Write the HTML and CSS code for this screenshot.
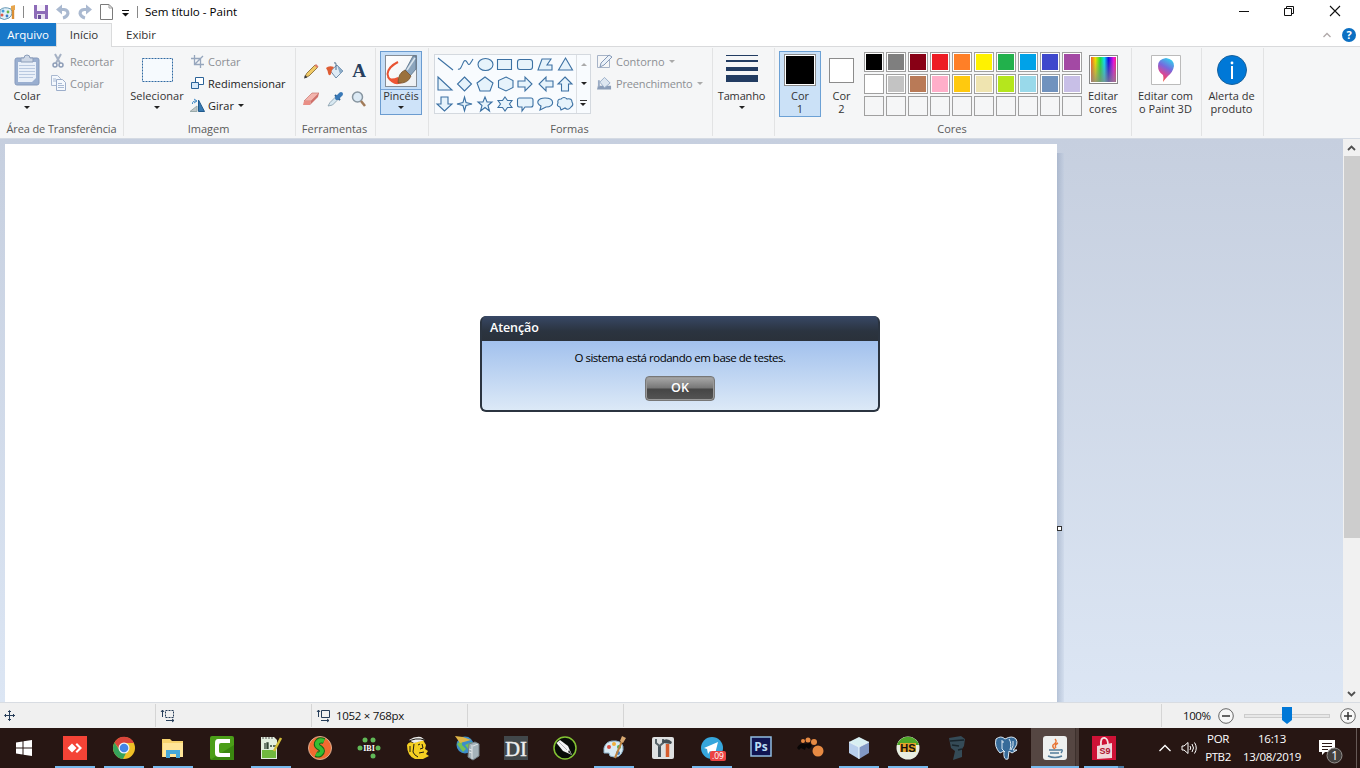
FILE: index.html
```html
<!DOCTYPE html>
<html lang="pt-BR">
<head>
<meta charset="utf-8">
<title>Sem título - Paint</title>
<link rel="stylesheet" href="styles.css">
</head>
<body>
<div class="screen">
  <header class="titlebar">
    <svg class="app-icon" width="16" height="20" viewBox="0 0 16 20"><path d="M0 8Q4 4 11 7Q14 12 9 16Q4 19 0 16Z" fill="#e3f1f8" stroke="#6497b5"/><circle cx="3" cy="9" r="1.5" fill="#4299d5"/><circle cx="8" cy="10" r="1.4" fill="#67b548"/><circle cx="2" cy="13" r="1.5" fill="#df5a4c"/><circle cx="7" cy="14" r="1.4" fill="#3b7bc4"/><path d="M13 7V17" stroke="#d88d34" stroke-width="2.4"/><path d="M11 4l4-1v5h-4z" fill="#e6a54d"/></svg>
    <i class="tsep first"></i>
    <svg class="save" width="14" height="14" viewBox="0 0 14 14"><path d="M0 0H14V14H1L0 13Z" fill="#8d6bb8"/><path d="M3 0h8v6H3z" fill="#f7f4fb"/><path d="M3 9h8v5H3z" fill="#e5e1ee"/><path d="M4 10h3v4H4z" fill="#69509a"/></svg>
    <svg class="undo" width="14" height="14" viewBox="0 0 14 14"><path d="M3 4.500H8Q12 5 12 8.500Q11 12 7 13" fill="none" stroke="#aab9d0" stroke-width="3"/><path d="M0 4.500L6 -.5V9.500Z" fill="#aab9d0"/></svg>
    <svg class="redo" width="14" height="14" viewBox="0 0 14 14"><path d="M11 4.500H6Q2 5 2 8.500Q3 12 7 13" fill="none" stroke="#aab9d0" stroke-width="3"/><path d="M14 4.500L8 -.5V9.500Z" fill="#aab9d0"/></svg>
    <svg class="newdoc" width="13" height="16" viewBox="0 0 13 16"><path d="M.5.5H9L12.500 4V15.500H.5Z" fill="#fff" stroke="#7b7b7b"/><path d="M9 .5V4h3.500" fill="none" stroke="#9b9b9b"/></svg>
    <svg class="qmenu" width="7" height="7" viewBox="0 0 7 7"><path d="M0 .5H7" stroke="#111"/><path d="M0 3H7L3.500 6.500Z" fill="#111"/></svg>
    <i class="tsep second"></i>
    <span class="wtitle">Sem título - Paint</span>
    <div class="wctl">
      <svg width="12" height="12" viewBox="0 0 12 12"><path d="M1 6.500H11" stroke="#111"/></svg>
      <svg width="12" height="12" viewBox="0 0 12 12"><path d="M1.500 3.500h7v7h-7zM3.500 3V1.500h7v7H9" fill="none" stroke="#111"/></svg>
      <svg width="12" height="12" viewBox="0 0 12 12"><path d="M1 1L11 11M11 1L1 11" stroke="#111" stroke-width="1.100"/></svg>
    </div>
  </header>
  <nav class="tabs">
    <span class="tab file">Arquivo</span><span class="tab active">Início</span><span class="tab view">Exibir</span>
    <svg class="collapse" width="8" height="6" viewBox="0 0 8 6"><path d="M.5 5L4 1.500L7.500 5" fill="none" stroke="#b0a9a9" stroke-width="1.300"/></svg>
    <span class="help">?</span>
  </nav>
  <section class="ribbon">
    <div class="group g-clip">
      <div class="content">
        <div class="big colar">
          <div class="bicon"><svg width="26" height="32" viewBox="0 0 26 32"><rect x="1" y="4" width="24" height="27" rx="2" fill="#9aafd0" stroke="#879bbd"/><path d="M4 8H22V24L18 28H4Z" fill="#e9f0f9"/><path d="M5 11.500H21M5 14.500H21M5 17.500H21M5 20.500H21M5 23.500H19" stroke="#b9c9e0"/><path d="M7 4h3q0-3 3-3t3 3h3v4H7z" fill="#cdd7e6" stroke="#8b9db9"/></svg></div>
          <span>Colar</span><b class="arr"></b>
        </div>
        <div class="smalls clipsm">
          <div class="small off"><svg width="14" height="14" viewBox="0 0 14 14"><path d="M4 0L9 9M10 0L5 9" stroke="#a5b1c4" stroke-width="2"/><circle cx="4" cy="11" r="2" fill="none" stroke="#8d9db7" stroke-width="1.500"/><circle cx="10" cy="11" r="2" fill="none" stroke="#8d9db7" stroke-width="1.500"/></svg><span>Recortar</span></div>
          <div class="small off"><svg width="15" height="16" viewBox="0 0 15 16"><path d="M.5.5h6l3 3v7h-9z" fill="#f4f8fd" stroke="#a9b8d0"/><path d="M5.500 4.500h6l3 3v8h-9z" fill="#f4f8fd" stroke="#9caecb"/><path d="M2 4h3M2 6h3M7 8.500h4M7 10.500h6M7 12.500h6" stroke="#a9bad4"/></svg><span>Copiar</span></div>
        </div>
      </div>
      <div class="glabel">Área de Transferência</div>
    </div>
    <div class="group g-image">
      <div class="content">
        <div class="big selec"><div class="bicon"><svg width="31" height="26" viewBox="0 0 31 26"><rect x=".5" y="1.500" width="30" height="23" fill="#f6fafe" stroke="#316aa3" stroke-dasharray="2 1"/></svg></div><span>Selecionar</span><b class="arr"></b></div>
        <div class="smalls imgsm">
          <div class="small off"><svg width="13" height="13" viewBox="0 0 13 13"><path d="M3.500 0V9.500H13M0 3.500H9.500V13M4 9L12 1" fill="none" stroke="#96a6bd" stroke-width="1.300"/></svg><span>Cortar</span></div>
          <div class="small"><svg width="13" height="13" viewBox="0 0 13 13"><path d="M4.500.5h8v7h-8z" fill="#fff" stroke="#2c6499"/><path d="M.5 5.500h7v6h-7z" fill="#d8eafa" stroke="#2c6499"/></svg><span>Redimensionar</span></div>
          <div class="small"><svg width="13" height="13" viewBox="0 0 13 13"><path d="M-1 12.500L6 7V12.500Z" fill="#c2c7c8" stroke="#9aa"/><path d="M7.500 1V12.500H13.500Z" fill="#3779b2" stroke="#205a8d"/><path d="M1.500 5Q1 2 5 2M3 0l3 2-3 2" fill="none" stroke="#438bc6"/></svg><span>Girar</span><b class="arr"></b></div>
        </div>
      </div>
      <div class="glabel">Imagem</div>
    </div>
    <div class="group g-tools">
      <div class="content toolgrid">
        <svg width="18" height="18" viewBox="0 0 18 18"><path d="M3 15L4.500 11.500L13 3L15.500 5.500L7 14Z" fill="#f0ca67" stroke="#8c7039" stroke-width=".9"/><path d="M12.500 3.500l2.500 2.500 1.500-1.500-2.500-2.500z" fill="#dc7c6a"/><path d="M2 16.500l1-3.500 2.500 2.500z" fill="#393939"/></svg>
        <svg width="18" height="18" viewBox="0 0 18 18"><path d="M4.500 9L11 3L17 9L10 16Z" fill="#dfebf5" stroke="#718daa"/><path d="M11 3L17 9L14 12Z" fill="#8dadc9"/><path d="M10 8V2Q10 0 8 1" fill="none" stroke="#53718d"/><path d="M0 6Q3 3 8 5Q5 8 5 12Q3 15 2 11Q2 9 0 6Z" fill="#de5d34"/></svg>
        <span class="letter">A</span>
        <svg width="18" height="18" viewBox="0 0 18 18"><path d="M2 11L10 3H17L9 11Z" fill="#f3b4ad" stroke="#c8766f" stroke-width=".7"/><path d="M2 11H9L8 15H1Z" fill="#e98f86"/><path d="M9 11L17 3L16 7L8 15Z" fill="#cf706a"/></svg>
        <svg width="18" height="18" viewBox="0 0 18 18"><path d="M2 16L4 12.500L10 6.500L12.500 9L6.500 15Z" fill="#d8e8f1" stroke="#839aaa" stroke-width=".8"/><path d="M9 5L14 10" stroke="#285d91" stroke-width="2"/><path d="M11 8L15 4" stroke="#3979b7" stroke-width="4" stroke-linecap="round"/></svg>
        <svg width="18" height="18" viewBox="0 0 18 18"><circle cx="7.500" cy="7" r="5" fill="#dceaf5" stroke="#8795a0" stroke-width="1.500"/><path d="M11 11L15 16" stroke="#a17b59" stroke-width="2.500"/></svg>
      </div>
      <div class="glabel">Ferramentas</div>
    </div>
    <div class="group g-brush">
      <div class="content">
        <div class="big brushbtn">
          <div class="bicon"><svg width="32" height="32" viewBox="0 0 32 32"><defs><linearGradient id="bg" y2="1" x2="1"><stop stop-color="#fff"/><stop offset="1" stop-color="#eceff2"/></linearGradient></defs><rect x=".5" y=".5" width="31" height="31" fill="url(#bg)" stroke="#858d96"/><path d="M13 7Q3 12 2.500 19Q3 26 13 28" fill="none" stroke="#e85332" stroke-width="2"/><path d="M2 22Q6 25 13 22L17 28Q8 32 2 22Z" fill="#ee5534"/><path d="M20 16L28 1H31V14L25 21Z" fill="#8ca5bd" stroke="#4c657e" stroke-width=".7"/><path d="M22 15L30 3" stroke="#dae5ed" stroke-width="1.500"/><path d="M13 28Q13 18 20 15L26 21Q23 29 13 28Z" fill="#9b713c" stroke="#6e4c2a" stroke-width=".7"/></svg></div>
          <span>Pincéis</span><b class="arr"></b>
        </div>
      </div>
    </div>
    <div class="group g-shapes">
      <div class="content">
        <div class="shapebox">
          <svg width="140" height="58" viewBox="0 0 140 58"><g fill="#e6f3fb" stroke="#3c71a3" stroke-width="1.100"><path d="M3 3L18 15"/><path d="M23 14C27 16 28 3 31 6S33 13 38 4" fill="none"/><ellipse cx="50.500" cy="9.500" rx="7.500" ry="6"/><path d="M62.500 4.500h14v10h-14z"/><rect x="82.500" y="4.500" width="15" height="10" rx="2.500"/><path d="M107 4H116L112 10H117V15H103Z"/><path d="M130.500 3L137.500 15H123.500Z"/>
          <path d="M3 22L17 35H3Z"/><path d="M29.500 22L36.500 29L29.500 36L22.500 29Z"/><path d="M50 22L58 28L55 36H45L42 28Z"/><path d="M71 22L78 25.500V32.500L71 36L63.500 32.500V25.500Z"/><path d="M83 26H90V22L97 29L90 36V32H83Z"/><path d="M118 26H111V22L104 29L111 36V32H118Z"/><path d="M130 22L137 29H133.500V36H126.500V29H123Z"/>
          <path d="M6 42H13V49H17L9.500 56L2 49H6Z"/><path d="M29.500 42L31 47.500L37 49L31 50.500L29.500 56L28 50.500L22 49L28 47.500Z"/><path d="M50 42L52 47H57L53 50.500L54.500 56L50 52.500L45.500 56L47 50.500L43 47H48Z"/><path d="M70 42L72.500 45.500H77L74.500 49L77 52.500H72.500L70 56L67.500 52.500H63L65.500 49L63 45.500H67.500Z"/><path d="M84 43H96Q98 43 98 45V50Q98 52 96 52H90L87 56V52H84Q82.500 52 82.500 50V45Q82.500 43 84 43Z"/><path d="M110 43C120 43 120 52 111 52L105 55L106 51C100 48 103 43 110 43Z"/><path d="M126 44Q129 41 132 44Q137 43 137 47Q139 50 136 52Q133 56 130 53L126 55L125 52Q121 51 123 48Q122 44 126 44Z"/></g></svg>
          <div class="shapescroll"><b class="up"></b><b class="arr"></b><div class="more"><i></i><b class="arr"></b></div></div>
        </div>
        <div class="smalls shsm">
          <div class="small off"><svg width="15" height="15" viewBox="0 0 15 15"><path d="M.5 1.500H12.500V13.500H.5Z" fill="none" stroke="#a6b3c7"/><path d="M3 13L4 9L12 1L15 3L7 11Z" fill="#eaf1f9" stroke="#8498b6"/></svg><span>Contorno</span><b class="arr dim"></b></div>
          <div class="small off"><svg width="15" height="15" viewBox="0 0 16 15"><path d="M1 10H15V14H0Z" fill="#8b9db8"/><path d="M3 6L8 1L14 7L8 12Z" fill="#dee7f1" stroke="#9aaec8"/><path d="M2 4V11" stroke="#9bacc4" stroke-width="2"/></svg><span class="fill">Preenchimento</span><b class="arr dim"></b></div>
        </div>
      </div>
      <div class="glabel">Formas</div>
    </div>
    <div class="group g-size"><div class="content"><div class="big"><div class="bicon lines"><i></i><i></i><i></i><i></i></div><span>Tamanho</span><b class="arr"></b></div></div></div>
    <div class="group g-colors">
      <div class="content">
        <div class="big cor one"><div class="bicon"><i class="cur black"></i></div><span>Cor<br>1</span></div>
        <div class="big cor two"><div class="bicon"><i class="cur white"></i></div><span>Cor<br>2</span></div>
        <div class="palette">
          <i class="k0"></i><i class="k1"></i><i class="k2"></i><i class="k3"></i><i class="k4"></i><i class="k5"></i><i class="k6"></i><i class="k7"></i><i class="k8"></i><i class="k9"></i>
          <i class="l0"></i><i class="l1"></i><i class="l2"></i><i class="l3"></i><i class="l4"></i><i class="l5"></i><i class="l6"></i><i class="l7"></i><i class="l8"></i><i class="l9"></i>
          <i class="e"></i><i class="e"></i><i class="e"></i><i class="e"></i><i class="e"></i><i class="e"></i><i class="e"></i><i class="e"></i><i class="e"></i><i class="e"></i>
        </div>
        <div class="big edit"><div class="bicon"><i class="rainbow"></i></div><span>Editar<br>cores</span></div>
      </div>
      <div class="glabel">Cores</div>
    </div>
    <div class="group g-3d"><div class="content"><div class="big"><div class="bicon"><svg width="30" height="30" viewBox="0 0 30 30"><defs><linearGradient id="p3" x1=".7" y1="0" x2=".3" y2="1"><stop stop-color="#30d1ee"/><stop offset=".4" stop-color="#7769dd"/><stop offset=".7" stop-color="#d94895"/><stop offset="1" stop-color="#f05b37"/></linearGradient></defs><path d="M.5.5h29v29H.5z" fill="#fff" stroke="#bbb"/><path d="M15 3Q23 4 23 11Q22 17 17 21Q14 24 12 27Q13 23 12 20Q7 17 7 11Q7 4 15 3Z" fill="url(#p3)"/></svg></div><span>Editar com<br>o Paint 3D</span></div></div></div>
    <div class="group g-alert"><div class="content"><div class="big"><div class="bicon"><svg width="30" height="30" viewBox="0 0 30 30"><circle cx="15" cy="15" r="14.500" fill="#0078d7" stroke="#17619d"/><circle cx="15" cy="8" r="1.400" fill="#fff"/><path d="M15 11V24" stroke="#fff" stroke-width="2"/></svg></div><span>Alerta de<br>produto</span></div></div></div>
  </section>
  <main class="work">
    <div class="canvas"><i class="handle"></i></div><i class="shade"></i>
    <div class="scroll">
      <svg width="16" height="17" viewBox="0 0 16 17"><path d="M5 11L8.500 7.500L12 11" fill="none" stroke="#505050" stroke-width="1.800"/></svg>
      <i class="thumb"></i>
      <svg class="down" width="16" height="17" viewBox="0 0 16 17"><path d="M5 7L8.500 10.500L12 7" fill="none" stroke="#505050" stroke-width="1.800"/></svg>
    </div>
  </main>
  <footer class="status">
    <div class="cell c1"><svg width="12" height="12" viewBox="0 0 12 12"><path d="M5.500 1V11M1 5.500H11" stroke="#263d59"/><path d="M4 2L5.500 .500L7 2M4 9L5.500 10.500L7 9M2 4L.5 5.500L2 7M9 4L10.500 5.500L9 7" fill="none" stroke="#263d59"/></svg></div>
    <div class="cell c2"><svg width="15" height="13" viewBox="0 0 15 13"><path d="M1.500 8V1M0 3l1.500-2L3 3M5 11.500h8M11 10l2 1.500-2 1.500" fill="none" stroke="#263d59"/><path d="M4.500 1.500h8v7h-8z" fill="none" stroke="#263d59" stroke-dasharray="2 1"/></svg></div>
    <div class="cell c3"><svg width="14" height="13" viewBox="0 0 14 13"><path d="M1.500 8V1M0 3l1.500-2L3 3M4 11.500h8M10 10l2 1.500-2 1.500M4.500 1.500h8v7h-8z" fill="none" stroke="#263d59"/></svg><span>1052 × 768px</span></div>
    <div class="cell c4"></div><div class="cell c5"></div>
    <div class="zoom"><span>100%</span><svg width="16" height="16" viewBox="0 0 16 16"><circle cx="8" cy="8" r="7.300" fill="#f7f7f7" stroke="#666"/><path d="M4 8H12" stroke="#333" stroke-width="1.500"/></svg><div class="track"><svg width="10" height="17" viewBox="0 0 10 17"><path d="M0 0H10V13L5 17L0 13Z" fill="#0078d7"/></svg></div><svg width="16" height="16" viewBox="0 0 16 16"><circle cx="8" cy="8" r="7.300" fill="#f7f7f7" stroke="#666"/><path d="M4 8H12M8 4V12" stroke="#333" stroke-width="1.500"/></svg></div>
  </footer>
  <footer class="taskbar">
    <div class="start"><svg width="16" height="16" viewBox="0 0 16 16"><path d="M0 2.500L6.500 1.500V7.500H0ZM7.500 1.300L16 0V7.500H7.500ZM0 8.500H6.500V14.500L0 13.500ZM7.500 8.500H16V16L7.500 14.700Z" fill="#fff"/></svg></div>
    <div class="apps">
      <div class="app on"><svg viewBox="0 0 24 24"><path d="M0 0h24v24H0z" fill="#f44336"/><path d="M9 7.500L13.500 12L9 16.500L4.500 12ZM12.500 8.500L14 7L19 12L14 17L12.500 15.500L16 12Z" fill="#fff"/></svg></div>
      <div class="app on"><svg viewBox="0 0 24 24"><circle cx="12" cy="12" r="11" fill="#efbf26"/><path d="M2.500 6.500A11 11 0 0 1 22 7H12L8 14Z" fill="#d9453b"/><path d="M2.500 6.500L8 15L14 17L11 23A11 11 0 0 1 2.500 6.500Z" fill="#36a35b"/><circle cx="12" cy="12" r="5.500" fill="#eef4fa"/><circle cx="12" cy="12" r="4.300" fill="#4285e5"/></svg></div>
      <div class="app on"><svg viewBox="0 0 24 24"><path d="M1 3H9L11 5H22V21H1Z" fill="#f7d36d"/><path d="M2 7H22V21H2Z" fill="#ffe598"/><path d="M5 22V14H19V22H15V18H9V22Z" fill="#45a7d8"/></svg></div>
      <div class="app"><svg viewBox="0 0 24 24"><rect width="24" height="24" rx="2" fill="#4b9e18"/><path d="M0 24L24 9V24Z" fill="#3a870f"/><path d="M20 3H8Q5 3 5 7V17Q5 21 9 21H20V17H10Q9 17 9 15V9Q9 7 11 7H20Z" fill="#fff"/></svg></div>
      <div class="app on"><svg viewBox="0 0 24 24"><path d="M2 1H15L18 4V23H2Z" fill="#e3eede"/><path d="M3 14H17V22H3Z" fill="#70b83e"/><path d="M4 1v2M7 1v2M10 1v2M13 1v2" stroke="#555"/><path d="M6 13V7M8 13V7H9V13M11 10H13M14 10H17" fill="none" stroke="#334535" stroke-width="1.300"/><path d="M22 2L15 15" stroke="#d3bd39" stroke-width="2.500"/></svg></div>
      <div class="app"><svg viewBox="0 0 24 24"><circle cx="12" cy="12" r="11.500" fill="#f06b30" stroke="#d9ad91"/><path d="M16 5Q11 3 9 7Q8 10 12 12Q16 15 12 18Q10 19 8 18" fill="none" stroke="#166516" stroke-width="6"/><path d="M16 5Q11 3 9 7Q8 10 12 12Q16 15 12 18Q10 19 8 18" fill="none" stroke="#36bd32" stroke-width="4"/></svg></div>
      <div class="app"><svg viewBox="0 0 24 24"><g fill="#61b957"><circle cx="8" cy="4" r="2.500"/><circle cx="16" cy="4" r="2.500"/><circle cx="3" cy="12" r="2.500"/><circle cx="21" cy="12" r="2.500"/><circle cx="16" cy="20" r="2.500"/></g><text x="12" y="14.500" text-anchor="middle" class="mini">IBI</text></svg></div>
      <div class="app"><svg viewBox="0 0 24 24"><path d="M1 9Q3 5 7 7L17 4L20 9L19 13L22 15L20 18L23 20L17 23H9Q1 20 1 9Z" fill="#f5cf22"/><path d="M3 4Q9 0 15 1L19 4L8 7Z" fill="#eee"/><path d="M2 6Q9 1 19 4M8 8L7 16Q8 19 12 21M12 9l2-1M16 8l1 4-3 1M13 17l5-1M4 10v6" fill="none" stroke="#1c1913" stroke-width="1"/></svg></div>
      <div class="app"><svg viewBox="0 0 24 24"><circle cx="10" cy="9" r="8.500" fill="#3c8dca"/><path d="M2 8Q8 2 7 9L11 13L8 16M10 9L17 6L14 14Z" fill="#75c254"/><path d="M0 0L8 1L16 4L5 7Z" fill="#dfb547"/><path d="M14 8L20 6L24 8V20L18 24L13 21Z" fill="#a5b3ba" stroke="#748087"/><path d="M17 9V23M18 10L23 8M14 13L17 14M14 16L17 17" stroke="#e1e6e8"/></svg></div>
      <div class="app"><svg viewBox="0 0 24 24"><path d="M0 0h24v24H0z" fill="#41474a"/><text x="12" y="19.500" text-anchor="middle" textLength="22" lengthAdjust="spacingAndGlyphs" class="di">DI</text></svg></div>
      <div class="app"><svg viewBox="0 0 24 24"><circle cx="12" cy="12" r="11" fill="#080c07" stroke="#83c333" stroke-width="1.500"/><path d="M3.500 7L7 4L15 10L19 19L10 15Z" fill="#f4f4f4"/><path d="M6 6L14 14" stroke="#999" stroke-width=".7"/><path d="M15 16L19 19L16 14Z" fill="#333"/></svg></div>
      <div class="app on"><svg viewBox="0 0 24 24"><path d="M2 12Q4 4 14 5Q22 6 21 14Q18 24 8 20L7 17L2 17Z" fill="#d9ebf4" stroke="#8eb3cb"/><circle cx="7" cy="11" r="2" fill="#d64e43"/><circle cx="12" cy="8" r="2" fill="#f0af3b"/><circle cx="17" cy="11" r="2" fill="#4aae54"/><circle cx="16" cy="17" r="2" fill="#3b7bc2"/><path d="M13 22L20 5" stroke="#bd8340" stroke-width="2"/><path d="M18 5L20 0L24 2L21 7Z" fill="#d8a871"/></svg></div>
      <div class="app"><svg viewBox="0 0 24 24"><rect x="1" y="1" width="22" height="22" rx="2" fill="#dfe1e2"/><path d="M8.500 9V21" stroke="#46535c" stroke-width="3"/><path d="M5 3V7L8.500 10L12 7V3" fill="none" stroke="#58646a" stroke-width="2"/><path d="M11 5Q16 1 21 6L20 8L12 7Z" fill="#444e54"/><path d="M16.500 8V21" stroke="#d55c2e" stroke-width="3.500"/></svg></div>
      <div class="app on"><svg viewBox="0 0 24 24"><circle cx="12" cy="12" r="11" fill="#36a6dc"/><path d="M4 12L18 6L15 18L10 15L8 18L7 13Z" fill="#fff"/><rect x="10" y="15" width="16" height="10" rx="2" fill="#eb4242"/><text x="18" y="23" text-anchor="middle" class="badge">.09</text></svg></div>
      <div class="app"><svg viewBox="0 0 24 24"><path d="M2 1H22V20H2Z" fill="#101552" stroke="#91bde1" stroke-width="1.500"/><text x="12" y="15" text-anchor="middle" class="ps">Ps</text></svg></div>
      <div class="app"><svg viewBox="0 0 24 24"><g fill="#e78a43"><circle cx="5" cy="5" r="2"/><circle cx="10" cy="4" r="2.500"/><circle cx="16" cy="6" r="3"/><circle cx="20" cy="15" r="5.500"/></g><path d="M-1 12Q2 6 7 8L12 7L14 10L11 13L8 11L7 14L3 12L1 14Z" fill="#090606"/></svg></div>
      <div class="app on"><svg viewBox="0 0 24 24"><path d="M2 6L12 1L22 6L12 11Z" fill="#d8eff2"/><path d="M2 6L12 11V23L2 17Z" fill="#b9cfec"/><path d="M22 6L12 11V23L22 17Z" fill="#8197c3"/><path d="M2 6L12 11L22 6M12 11V23" fill="none" stroke="#effcff"/></svg></div>
      <div class="app on"><svg viewBox="0 0 24 24"><circle cx="12" cy="12" r="11.500" fill="#e8eee1"/><path d="M1 9A11.500 11.500 0 0 1 23 9Z" fill="#4fa728"/><path d="M4 7H20V16H4Z" fill="#e3a32a"/><text x="12" y="16" text-anchor="middle" class="hs">HS</text></svg></div>
      <div class="app"><svg viewBox="0 0 24 24"><path d="M4 2L16 0L20 3L19 10L17 13L17 21L8 24L10 15L6 12Z" fill="#354b57"/><path d="M5 5L19 4M7 9L14 10M13 14L17 13" stroke="#18252c" stroke-width="1.500"/></svg></div>
      <div class="app"><svg viewBox="0 0 24 24"><path d="M2 3Q7-1 11 3Q18-1 22 3Q25 8 19 14H23L18 17L15 15L14 23Q9 25 10 15L6 17Q0 11 2 3Z" fill="#376b99" stroke="#dbe9f4"/><path d="M8 4V13L11 16M15 3Q18 7 16 14M17 14Q20 10 19 5" fill="none" stroke="#dbe9f4"/><circle cx="9" cy="6" r=".8" fill="#fff"/></svg></div>
      <div class="app on java"><svg viewBox="0 0 24 24"><rect width="24" height="24" rx="3" fill="#eef0ef"/><path d="M12 3Q15 6 10 9Q9 11 12 13M15 7Q11 9 13 12" fill="none" stroke="#e87535" stroke-width="1.400"/><path d="M6 14H17M7 17H16M5 20Q12 23 19 20M17 14Q21 13 18 17" fill="none" stroke="#537c9a" stroke-width="1.400"/></svg></div>
      <div class="app on s9"><svg viewBox="0 0 24 24"><path d="M0 0h24v24H0z" fill="#ce1236"/><path d="M5 10L20 7V22L5 23Z" fill="#f1d7db"/><path d="M9 10Q8 1 13 2Q16 3 16 9" fill="none" stroke="#f5dfe2" stroke-width="1.800"/><text x="13" y="18" text-anchor="middle" class="s9t">S9</text></svg></div>
    </div>
    <div class="tray">
      <svg width="12" height="8" viewBox="0 0 12 8"><path d="M.5 7L6 1.500L11.500 7" fill="none" stroke="#fff" stroke-width="1.300"/></svg>
      <svg class="speaker" width="17" height="14" viewBox="0 0 17 14"><path d="M1 5H3L7 1.500V12.500L3 9H1Z" fill="none" stroke="#fff"/><path d="M9 5Q10.500 7 9 9M11 3Q14 7 11 11M13.500 1.500Q17 7 13.500 12.500" fill="none" stroke="#fff"/></svg>
      <span class="lang">POR<br>PTB2</span><span class="clock">16:13<br>13/08/2019</span>
      <svg class="notice" width="25" height="25" viewBox="0 0 25 25"><path d="M1 1H17V13H7L4 16V13H1Z" fill="#fff"/><path d="M4 4.500H14M4 7.500H14M4 10.500H10" stroke="#2a1a17"/><circle cx="16.500" cy="16.500" r="7.500" fill="#44413f" stroke="#93908e"/><text x="16.500" y="20.500" text-anchor="middle" class="num">1</text></svg>
    </div>
  </footer>
  <div class="dialog"><div class="dhead">Atenção</div><div class="dbody"><p>O sistema está rodando em base de testes.</p><button>OK</button></div></div>
</div>
</body>
</html>
```
FILE: styles.css
```css
* { box-sizing: border-box; }
body { margin: 0; overflow: hidden; font: 11px "Open Sans", "Noto Sans", sans-serif; color: #333; }
svg { display: block; flex: none; overflow: visible; }
.screen { position: relative; width: 1360px; height: 768px; display: flex; flex-direction: column; background: #fff; }
.titlebar { height: 23px; display: flex; align-items: center; flex: none; }
.tsep { width: 1px; height: 12px; background: #888; }
.tsep.first { margin-left: 7px; }
.save { margin-left: 10px; }
.undo { margin-left: 8px; }
.redo { margin-left: 8px; }
.newdoc { margin-left: 8px; }
.qmenu { margin: 3px 8px 0 9px; }
.wtitle { margin-left: 7px; font-size: 11.6px; color: #000; white-space: nowrap; }
.wctl { margin-left: auto; margin-right: 19px; display: flex; gap: 33px; padding-bottom: 2px; }
.wctl svg:nth-child(2) { margin-right: 1px; }
.tabs { height: 24px; flex: none; display: flex; align-items: center; border-bottom: 1px solid #d9dadc; }
.tab { height: 23px; line-height: 23px; text-align: center; font-size: 11.5px; }
.tab.file { width: 56px; background: #1979ca; color: #fff; }
.tab.active { width: 56px; height: 24px; line-height: 21px; background: #f5f6f7; border: 1px solid #dadbdc; border-bottom: 0; align-self: flex-start; }
.tab.view { width: 58px; }
.collapse { margin-left: auto; margin-right: 11px; }
.help { width: 14px; height: 14px; border-radius: 50%; background: #0b6fc2; color: #fff; font-weight: 700; font-size: 11px; line-height: 14px; text-align: center; margin-right: 4px; }
.ribbon { height: 92px; flex: none; display: flex; background: #f5f6f7; border-bottom: 1px solid #d4dae3; }
.group { height: 88px; margin-top: 1px; border-right: 1px solid #e2e3e4; display: flex; flex-direction: column; }
.content { height: 73px; display: flex; padding-top: 3px; flex: none; }
.glabel { height: 16px; line-height: 15px; text-align: center; color: #5a5a5a; white-space: nowrap; padding-right: 2px; }
.g-clip { width: 124px; }
.g-image { width: 172px; }
.g-tools { width: 80px; }
.g-brush { width: 53px; }
.g-shapes { width: 284px; }
.g-size { width: 62px; }
.g-colors { width: 357px; }
.g-3d { width: 70px; }
.g-alert { width: 62px; }
.g-clip .glabel { letter-spacing: -.12px; padding-right: 0; }
.big { display: flex; flex-direction: column; align-items: center; text-align: center; line-height: 13px; white-space: nowrap; }
.bicon { height: 38px; display: flex; align-items: center; flex: none; }
.arr { width: 0; height: 0; border: 3px solid transparent; border-top-color: #222; border-bottom: 0; margin-top: 4px; }
.colar { width: 54px; }
.clipsm { margin-left: -3px; }
.smalls { display: flex; flex-direction: column; margin-top: -1px; }
.small { display: flex; align-items: center; height: 22px; white-space: nowrap; color: #222; }
.small svg { margin-right: 4px; }
.small.off { color: #8c8f94; }
.small .arr { margin: 0 0 0 4px; }
.arr.dim { border-top-color: #aaa; }
.clipsm .small:first-child svg { margin-right: 5px; }
.selec { width: 66px; }
.selec span { letter-spacing: .04px; }
.imgsm { margin-left: 1px; }
.toolgrid { display: grid; grid-template-columns: 24px 24px 24px; grid-template-rows: 28px 28px; padding: 9px 0 0 3px; place-items: center; align-content: start; }
.letter { font: bold 19px/20px "Liberation Serif", serif; color: #273e5e; }
.brushbtn { width: 42px; height: 64px; margin-left: 4px; background: linear-gradient(#c5def7 0 37px, #78a5d6 37px 38px, #cee3f9 38px); border: 1px solid #6b9cd0; }
.brushbtn .bicon { height: 37px; }
.shapebox { width: 157px; height: 60px; margin: 3px 0 0 5px; border: 1px solid #d4d9df; display: flex; background: #f8fbfe; }
.shapescroll { margin-left: 1px; width: 15px; border-left: 1px solid #dcdfe3; display: grid; grid-template-rows: repeat(3, 1fr); place-items: center; }
.shapescroll .arr { margin: 0; }
.shapescroll i { display: block; width: 7px; height: 1px; background: #333; margin-bottom: 2px; }
.more .arr { display: block; }
.up { border: 3px solid transparent; border-bottom-color: #aaa; border-top: 0; }
.shsm { margin-left: 6px; }
.shsm .fill { letter-spacing: -.16px; }
.g-size .big, .g-3d .big, .g-alert .big { width: 100%; }
.g-size .big { padding-right: 4px; }
.g-size .big span { letter-spacing: -.15px; }
.g-3d .big, .g-alert .big { padding-right: 2px; }
.lines { flex-direction: column; width: 32px; padding-top: 4px; }
.lines i { width: 32px; background: #223c62; height: 1px; }
.lines i:nth-child(2) { height: 2px; margin-top: 4px; }
.lines i:nth-child(3) { height: 4px; margin-top: 5px; }
.lines i:nth-child(4) { height: 7px; margin-top: 4px; }
.cor { width: 42px; height: 66px; }
.cor.one { margin-left: 4px; background: #cbe1f7; border: 1px solid #6ca1d5; }
.cor.one .bicon { height: 37px; }
.cor.two { padding-right: 1px; }
.cur { display: block; border: 1px solid #8c8c8c; padding: 1px; background-clip: content-box; }
.cur.black { width: 32px; height: 32px; background-color: #000; box-shadow: inset 0 0 0 1px #fff; margin-bottom: 1px; }
.cur.white { width: 25px; height: 25px; background: #fff; }
.palette { display: grid; grid-template-columns: repeat(10, 20px); grid-template-rows: repeat(3, 20px); gap: 2px; margin: 1px 0 0 1px; align-content: start; }
.palette i { border: 1px solid #a0a0a0; padding: 1px; background-clip: content-box; box-shadow: inset 0 0 0 1px #fff; }
.palette .e { box-shadow: none; }
.k0 { background-color: #000; }
.k1 { background-color: #7f7f7f; }
.k2 { background-color: #880015; }
.k3 { background-color: #ed1c24; }
.k4 { background-color: #ff7f27; }
.k5 { background-color: #fff200; }
.k6 { background-color: #22b14c; }
.k7 { background-color: #00a2e8; }
.k8 { background-color: #3f48cc; }
.k9 { background-color: #a349a4; }
.l0 { background-color: #fff; }
.l1 { background-color: #c3c3c3; }
.l2 { background-color: #b97a57; }
.l3 { background-color: #ffaec9; }
.l4 { background-color: #ffc90e; }
.l5 { background-color: #efe4b0; }
.l6 { background-color: #b5e61d; }
.l7 { background-color: #99d9ea; }
.l8 { background-color: #7092be; }
.l9 { background-color: #c8bfe7; }
.edit { width: 42px; }
.rainbow { width: 29px; height: 29px; margin-bottom: 2px; border: 1px solid #888; box-shadow: inset 0 0 0 1px #fff; padding: 1px; background: linear-gradient(transparent 15%, #888c), linear-gradient(90deg, #e43, #ed0 20%, #2d3 38%, #1de 53%, #11d 68%, #e1d 88%, #e34); background-clip: content-box; }
.work { flex: 1; min-height: 0; display: flex; background: linear-gradient(#c6cfdf, #dce6f4); padding: 5px 0 0 5px; }
.canvas { width: 1052px; background: #fff; position: relative; flex: none; }
.handle { position: absolute; left: 1052px; top: 382px; width: 5px; height: 5px; background: #fff; border: 1px solid #333; }
.shade { width: 7px; margin-top: 9px; background: linear-gradient(90deg, #94a4be88, #bbc9df44); }
.scroll { width: 17px; margin: -5px 0 0 auto; background: #f1f1f1; display: flex; flex-direction: column; }
.thumb { height: 382px; background: #cdcdcd; margin-left: 1px; }
.down { margin-top: auto; }
.status { height: 26px; flex: none; background: #f0f0f0; border-top: 1px solid #d8dce2; display: flex; align-items: center; color: #111; font-size: 11.5px; }
.cell { height: 23px; border-right: 1px solid #d5d5d5; display: flex; align-items: center; width: 156px; padding-left: 5px; }
.c1 { padding-left: 4px; }
.c3 span { margin-left: 5px; letter-spacing: -.3px; }
.c5 { width: 538px; }
.zoom { display: flex; align-items: center; padding-left: 21px; flex: 1; letter-spacing: -.4px; }
.zoom > svg { margin-left: auto; margin-right: 4px; }
.zoom > span + svg { margin: 0 0 0 7px; }
.track { width: 86px; height: 4px; border: 1px solid #ccc; background: #e7e7e7; margin-left: 10px; display: flex; align-items: center; justify-content: center; }
.taskbar { height: 40px; flex: none; background: #271613; display: flex; color: #fff; }
.start { width: 55px; padding: 12px 0 0 16px; }
.apps { display: flex; gap: 9px; }
.app { width: 40px; height: 40px; display: flex; justify-content: center; padding-top: 8px; }
.app svg { width: 24px; height: 24px; }
.app.on { border-bottom: 2px solid #76b9ed; }
.java { width: 48px; margin: 0 -4px; background: linear-gradient(90deg, #554642 44px, #3d302c 44px 45px, #4c3d39 45px); }
.s9 { border-image: linear-gradient(90deg, #76b9ed 33px, #4778a0 33px) 1; }
.app text { font-family: "Open Sans", sans-serif; }
.app .mini { font: bold 8px "Liberation Serif", serif; fill: #fff; }
.app .di { font: 22px "Liberation Serif", serif; fill: #eee; stroke: #eee; stroke-width: .4px; }
.badge { font-size: 8.5px; fill: #fff; }
.ps { font-size: 12px; font-weight: 700; fill: #bbdcf3; }
.app .hs { font: bold 11px "Liberation Sans", sans-serif; fill: #111; }
.app .s9t { font: bold 9px "Liberation Sans", sans-serif; fill: #ad1230; }
.tray { margin-left: auto; display: flex; align-items: center; border-right: 1px solid #665956; padding-right: 13px; margin-right: 3px; line-height: 18px; text-align: center; font-size: 11.5px; letter-spacing: -.4px; }
.speaker { margin: 0 5px 0 10px; }
.lang { width: 30px; }
.clock { width: 62px; margin: 0 15px 0 8px; letter-spacing: -.3px; }
.notice { margin-top: 6px; }
.num { font: 12px "Open Sans", sans-serif; fill: #fff; }
.dialog { position: absolute; left: 480px; top: 316px; width: 400px; height: 96px; border: 2px solid #2b3440; border-top: 0; border-radius: 6px; overflow: hidden; background: #2b3440; }
.dhead { height: 25px; padding-left: 8px; line-height: 23px; background: linear-gradient(#384866, #2b3440 60%, #2a313a); color: #fff; font-weight: 600; font-size: 12.5px; letter-spacing: -.1px; }
.dbody { height: 69px; background: linear-gradient(#a2c1ed, #dce9f7); display: flex; flex-direction: column; align-items: center; padding-top: 8px; border-radius: 0 0 4px 4px; }
.dbody p { margin: 0; color: #000; font-size: 11.5px; line-height: 17px; letter-spacing: -.48px; white-space: nowrap; }
.dbody button { width: 70px; height: 25px; margin-top: 10px; padding: 0 0 2px; border: 1px solid #777; border-radius: 4px; box-shadow: inset 0 0 0 1px #9a9a9a; background: linear-gradient(#a9a9a9, #777 48%, #454545 52%, #555); color: #fff; font: 600 12.5px "Open Sans", sans-serif; }
```
